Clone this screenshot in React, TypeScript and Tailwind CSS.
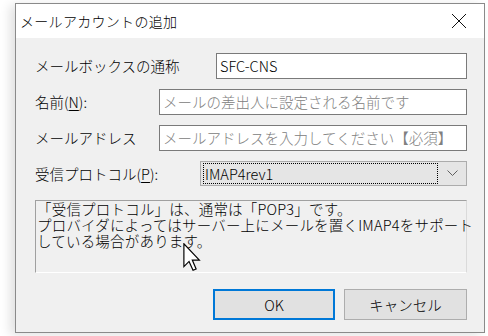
import React from "react";

const font = { fontFamily: '"Noto Sans CJK JP", "Noto Sans", sans-serif' };

export default function App() {
  return (
    <div
      className="w-[488px] h-[336px] bg-white pl-[15px] pt-[3px] overflow-hidden text-black"
      style={font}
    >
      <div className="relative w-[470px] h-[330px] border border-[#8a8a8a] flex flex-col shadow-[-5px_2px_10px_rgba(0,0,0,0.12)]">
        {/* title bar */}
        <div className="h-[34px] bg-white flex items-center justify-between pl-[4px] pr-[16px]">
          <span className="text-[14px] leading-[18px] tracking-[0.3px] font-light">メールアカウントの追加</span>
          <svg width="16" height="16" viewBox="0 0 16 16" className="mr-[1px]">
            <path d="M1 1 L15 15 M15 1 L1 15" stroke="#111" strokeWidth="1" fill="none" />
          </svg>
        </div>

        {/* body */}
        <div className="flex-1 bg-[#f0f0f0] pl-[19px] pr-[17px] pt-[15px] flex flex-col text-[14.5px] font-light">
          <div className="flex items-center h-[26px]">
            <span className="w-[181px] leading-[18px]">メールボックスの通称</span>
            <div className="flex-1 h-full bg-white border border-[#7a7a7a] flex items-center pl-[3px]">
              <span className="leading-[18px]">SFC-CNS</span>
            </div>
          </div>

          <div className="flex items-center h-[26px] mt-[10px]">
            <span className="w-[124px] leading-[18px]">
              名前(<span className="underline underline-offset-2">N</span>):
            </span>
            <div className="flex-1 h-full bg-white border border-[#7a7a7a] flex items-center pl-[3px]">
              <span className="leading-[18px] text-[#808080]">メールの差出人に設定される名前です</span>
            </div>
          </div>

          <div className="flex items-center h-[26px] mt-[10px]">
            <span className="w-[124px] leading-[18px]">メールアドレス</span>
            <div className="flex-1 h-full bg-white border border-[#7a7a7a] flex items-center pl-[3px]">
              <span className="leading-[18px] text-[#808080] whitespace-nowrap">メールアドレスを入力してください【必須】</span>
            </div>
          </div>

          <div className="flex items-center h-[25px] mt-[10px]">
            <span className="w-[165px] leading-[18px]">
              受信プロトコル(<span className="underline underline-offset-2">P</span>):
            </span>
            <div className="flex-1 h-full bg-[#e5e5e5] border border-[#acacac] flex items-stretch">
              <div className="flex-1 my-[1px] ml-[2px] border border-dotted border-black flex items-center pl-[1px]">
                <span className="leading-[18px]">IMAP4rev1</span>
              </div>
              <div className="w-[28px] flex items-center justify-center">
                <svg width="11" height="7" viewBox="0 0 11 7">
                  <path d="M0.5 0.5 L5.5 5.5 L10.5 0.5" stroke="#606060" strokeWidth="1" fill="none" />
                </svg>
              </div>
            </div>
          </div>

          <div className="h-[73px] mt-[14px] border-t border-l border-[#a0a0a0] border-r border-b border-r-[#dadada] border-b-[#ffffff] pl-[1px] leading-[16px] text-[14.5px] tracking-[0.2px]">
            <div>「受信プロトコル」は、通常は「POP3」です。</div>
            <div className="whitespace-nowrap">プロバイダによってはサーバー上にメールを置くIMAP4をサポート</div>
            <div>している場合があります。</div>
          </div>

          <div className="flex justify-end gap-[9px] mt-[16px]">
            <button className="w-[122px] h-[31px] bg-[#e1e1e1] border-2 border-[#0078d7] text-[14.5px] font-light leading-[18px]">
              OK
            </button>
            <button className="w-[123px] h-[31px] bg-[#e1e1e1] border border-[#adadad] text-[14.5px] font-light leading-[18px]">
              キャンセル
            </button>
          </div>
        </div>

        {/* mouse cursor */}
        <svg
          className="absolute left-[167px] top-[239px]"
          width="18"
          height="28"
          viewBox="0 0 12 19"
        >
          <path
            d="M0.5 0.5 L0.5 16 L4 12.5 L6.7 18.5 L8.8 17.6 L6.2 11.6 L11 11.6 Z"
            fill="#fff"
            stroke="#000"
            strokeWidth="0.8"
            strokeLinejoin="miter"
          />
        </svg>
      </div>
    </div>
  );
}
